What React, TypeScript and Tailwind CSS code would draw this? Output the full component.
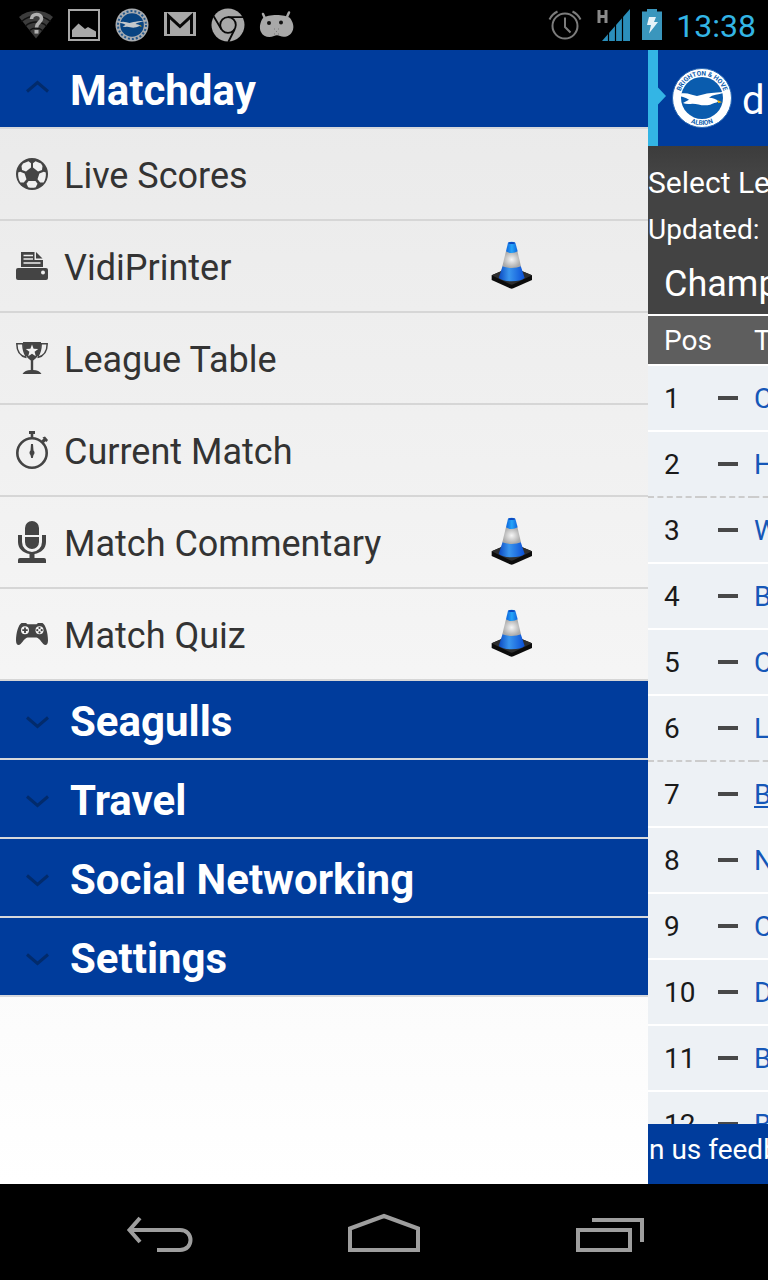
import { useState } from "react";
import type { ReactNode } from "react";

interface MenuItem {
  label: string;
  icon: ReactNode;
  flagged?: boolean;
}

interface TableRow {
  pos: number;
  team: string;
  dashed?: boolean;
  own?: boolean;
}

function FootballIcon() {
  return (
    <svg width="32" height="32" viewBox="0 0 32 32" aria-hidden="true">
      <circle cx="16" cy="16" r="16" fill="#444" />
      <g fill="#f0f0f0">
        <path d="M7 5.5 12.500 3.200l2.500 2V9.500l-5 3.900-4-1.300L5.500 8z" />
        <path d="M25 5.500 19.500 3.200l-2.500 2V9.500l5 3.900 4-1.300.5-4.100z" />
        <path d="M2.200 14.500l2-.7 4.400 1.600 1.900 5.800-2.700 3.300-3.400.1C2.700 22 1.800 18 2.200 14.500z" />
        <path d="M29.800 14.500l-2-.7-4.400 1.600-1.900 5.800 2.700 3.300 3.400.1c1.700-2.600 2.600-6.600 2.200-10.100z" />
        <path d="M12.500 23h7l2 2.800-1.700 3.500a14 14 0 0 1-7.600 0l-1.700-3.500z" />
      </g>
      <path d="M16 10.500l6 4.300-2.300 7h-7.400l-2.300-7z" fill="#444" />
    </svg>
  );
}

function PrinterIcon() {
  return (
    <svg width="32" height="28" viewBox="0 0 32 28" aria-hidden="true">
      <path d="M5 0h13.500v8H27v7H5z" fill="#444" />
      <path d="M20 0l6.500 6.500H20z" fill="#444" />
      <path d="M7.500 3.500H17M7.500 7H17M7.500 11h17" stroke="#eee" strokeWidth="1.5" />
      <path d="M2 16h28a2 2 0 0 1 2 2v8a2 2 0 0 1-2 2H2a2 2 0 0 1-2-2v-8a2 2 0 0 1 2-2z" fill="#444" />
      <circle cx="27" cy="20.5" r="2" fill="#eee" />
    </svg>
  );
}

function TrophyIcon() {
  return (
    <svg width="32" height="32" viewBox="0 0 32 32" aria-hidden="true">
      <path
        d="M8 1.700H.8c0 7 3 12.300 9.700 13.800M24 1.700h7.200c0 7-3 12.300-9.700 13.800M6.800 2c.2 5 1.200 9 3.200 12M25.200 2c-.2 5-1.200 9-3.200 12"
        fill="none"
        stroke="#444"
        strokeWidth="1.5"
      />
      <path
        d="M7 0h18c0 9-1.500 14-7.800 18.500V28c3.800.2 6.800 1.300 8.300 4h-19c1.500-2.700 4.500-3.800 8.300-4v-9.500C8.500 14 7 9 7 0z"
        fill="#444"
      />
      <path d="M16 2.500l1.600 4.300 4.600.2-3.600 2.800 1.200 4.400-3.800-2.500-3.800 2.500 1.200-4.400L9.800 7l4.600-.2z" fill="#f2f2f2" />
    </svg>
  );
}

function StopwatchIcon() {
  return (
    <svg width="32" height="38" viewBox="0 0 32 38" aria-hidden="true">
      <circle cx="16" cy="22" r="14.7" fill="none" stroke="#444" strokeWidth="2.6" />
      <path d="M13 0h6v3h-1.700v4h-2.600V3H13zM25.500 9.500l2-2-1-1L29 5.500l3 3.500-1.500 2-1-.7-2 2z" fill="#444" />
      <path d="M15 13h2l.5 6.500a3 3 0 0 1 0 4.500l-.7 3h-1.600l-.7-3a3 3 0 0 1 0-4.500z" fill="#444" />
    </svg>
  );
}

function MicrophoneIcon() {
  return (
    <svg width="32" height="42" viewBox="0 0 32 42" aria-hidden="true">
      <g fill="#444">
        <path d="M9 14V7a7 7 0 0 1 14 0v7zM9 16h14v5a7 7 0 0 1-14 0z" />
        <path d="M2 14h4v7a10 10 0 0 0 20 0v-7h4v7c0 6.500-5 11-11.500 12v4H28a2 2 0 0 1 2 2v3H2v-3a2 2 0 0 1 2-2h9.500v-4C7 32 2 27.500 2 21z" />
      </g>
    </svg>
  );
}

function GamepadIcon() {
  return (
    <svg width="32" height="22" viewBox="0 0 32 22" aria-hidden="true">
      <path
        d="M5.500 0h4.500l1.500 1.300h9L22 0h4.500c3 1.500 5.500 10 5.500 17.500 0 3-1.200 4.500-2.500 4.500-3 0-5.500-7-9-7.500h-9C8 15 5.500 22 2.500 22 1.200 22 0 20.500 0 17.500 0 10 2.500 1.500 5.500 0z"
        fill="#444"
      />
      <circle cx="9" cy="7.200" r="4" fill="#f4f4f4" />
      <circle cx="23.500" cy="7.200" r="4" fill="#f4f4f4" />
      <path d="M9 4.500v5.400M6.300 7.200h5.400" stroke="#444" strokeWidth="1.8" />
      <g fill="#444">
        <circle cx="23.500" cy="5" r="1.100" />
        <circle cx="23.500" cy="9.400" r="1.100" />
        <circle cx="21.300" cy="7.200" r="1.100" />
        <circle cx="25.700" cy="7.200" r="1.100" />
      </g>
    </svg>
  );
}

function ConeIcon() {
  return (
    <svg width="42" height="50" viewBox="0 0 126 150" role="img" aria-label="Under construction">
      <defs>
        <linearGradient id="coneBlue" x1="0" x2="1">
          <stop offset="0" stopColor="#0a48c0" />
          <stop offset="0.4" stopColor="#3a96ee" />
          <stop offset="1" stopColor="#0a4fd6" />
        </linearGradient>
        <linearGradient id="coneTip" x1="0" x2="1">
          <stop offset="0" stopColor="#0c63dc" />
          <stop offset="0.5" stopColor="#25a4f8" />
          <stop offset="1" stopColor="#0c63dc" />
        </linearGradient>
        <radialGradient id="coneWhite">
          <stop offset="0" stopColor="#f6f6f6" />
          <stop offset="1" stopColor="#aaa" />
        </radialGradient>
      </defs>
      <path d="M2 103l28-12h64l29 12v14l-56 25q-5 2-10 0L2 117z" fill="#0c0c0c" />
      <path d="M2 103l28-12h64l29 12-56 27q-5 2-10 0z" fill="#2e2e2e" />
      <path d="M35 74h54l12 37q-12 10-39 10t-39-10z" fill="url(#coneBlue)" />
      <path d="M45 30h34l11 46q-12 5-28 5t-28-5z" fill="url(#coneWhite)" />
      <path d="M51 5q11-5 22 0l7 26q-8 5-18 5t-17-5z" fill="url(#coneTip)" />
      <ellipse cx="62" cy="6" rx="10" ry="3" fill="#0a48c0" />
    </svg>
  );
}

function Seagull({ fill }: { fill: string }) {
  return (
    <>
      <path
        d="M3 27c6-2 11-2.200 16-.6l6 1.600 8-2c5-1.200 12-1.300 22-2.500-5 2.300-10 2.800-15 4.300l-3 2c4 .3 7 1 9.500 3.400l-2 1.300c-3 .5-5 2.200-9 2.700-6 .8-10-1.500-15-1.500-4 .4-7 .4-9.500-.6l6-3.300C14 29.500 9 28.200 3 27z"
        fill={fill}
      />
      <path d="M45.500 32l4.500 2.300-4 .6z" fill="#f4b400" />
    </>
  );
}

function Crest() {
  return (
    <svg width="60" height="60" viewBox="0 0 60 60" className="shrink-0" role="img" aria-label="Club crest">
      <defs>
        <path id="crestTop" d="M7.500 30a22.500 22.500 0 0 1 45 0" />
        <path id="crestBottom" d="M3 30a27 27 0 0 0 54 0" />
      </defs>
      <circle cx="30" cy="30" r="29.500" fill="#fff" stroke="#2a6ab5" />
      <circle cx="30" cy="30" r="21" fill="#0a5cae" />
      <Seagull fill="#fff" />
      <g fontFamily="Roboto, sans-serif" fontWeight="700" fontSize="6.500" fill="#0a5cae" textAnchor="middle">
        <text>
          <textPath href="#crestTop" startOffset="50%">
            BRIGHTON &amp; HOVE
          </textPath>
        </text>
        <text>
          <textPath href="#crestBottom" startOffset="50%">
            ALBION
          </textPath>
        </text>
      </g>
    </svg>
  );
}

function StatusBar() {
  return (
    <header className="flex h-[50px] shrink-0 items-center justify-between bg-black px-3">
      <div className="flex" aria-hidden="true">
        <svg width="48" height="50" viewBox="0 0 48 50">
          <path d="M7 17a26 26 0 0 1 34 0L24 38.500z" fill="#3c3c3c" />
          <path
            d="M9.500 21.500a22 22 0 0 1 29 0M13.500 26a16 16 0 0 1 21 0M17.500 30.500a10 10 0 0 1 13 0"
            fill="none"
            stroke="#111"
            strokeWidth="1.5"
          />
          <path d="M19.500 19c0-6 10-6 10-.5 0 4-5 4-5 9" fill="none" stroke="#b0b0b0" strokeWidth="3.6" />
          <path d="M22.500 30h4v3.600h-4z" fill="#b0b0b0" />
        </svg>
        <svg width="48" height="50" viewBox="0 0 48 50">
          <path d="M9 10h30v30H9z" fill="none" stroke="#a8a8a8" strokeWidth="2" />
          <path d="M12 37v-7l6.500-6.500 6.500 5.500 3-2 8 4.500V37z" fill="#a8a8a8" />
        </svg>
        <svg width="48" height="50" viewBox="0 0 48 50">
          <circle cx="24" cy="25" r="16.500" fill="#a8acb0" />
          <circle cx="24" cy="25" r="14" fill="none" stroke="#23588c" strokeWidth="2" strokeDasharray="2 2" />
          <circle cx="24" cy="25" r="11.800" fill="#084482" />
          <g transform="translate(9 9) scale(0.5)">
            <Seagull fill="#c4c8cc" />
          </g>
        </svg>
        <svg width="48" height="50" viewBox="0 0 48 50">
          <path d="M8 12h32v24H8z" fill="#a8a8a8" />
          <path d="M12.500 34V16L24 26.500 35.500 16v18" fill="none" stroke="#080808" strokeWidth="3" />
        </svg>
        <svg width="48" height="50" viewBox="0 0 48 50">
          <circle cx="24" cy="25" r="16.500" fill="#a8a8a8" />
          <circle cx="24" cy="25" r="7.800" fill="#a8a8a8" stroke="#080808" strokeWidth="1.8" />
          <path d="M24 17.200h15M17.500 29.500L9.500 16M30.800 29l-6.500 13" stroke="#080808" strokeWidth="1.8" />
        </svg>
        <svg width="48" height="50" viewBox="0 0 48 50">
          <path d="M11 14l2.500 5.500M37 12.500L34 19" stroke="#a8a8a8" strokeWidth="2.5" strokeLinecap="round" />
          <path
            d="M11 18c5-4 22-4 27 0 3 4 4.500 9 2.500 13-2 5-8 7-12.500 5-2-1-4-1-6 0-5 2.500-11 .5-13-4-2-4-1-10 2-14z"
            fill="#a8a8a8"
          />
          <circle cx="17" cy="23" r="2" fill="#111" />
          <circle cx="29" cy="22.500" r="2" fill="#111" />
          <path d="M22 29h1M26 29h1M24 31.500h1M22 34h1M26 34h1" stroke="#777" />
        </svg>
      </div>
      <div className="flex items-center">
        <svg width="124" height="50" viewBox="546 0 124 50" aria-hidden="true">
          <g fill="none" stroke="#7c7c7c" strokeWidth="2">
            <circle cx="565" cy="26" r="12.500" />
            <path d="M565 17.500V27l5.500 5.500M549.500 19.500a17 17 0 0 1 8-8M580.500 19.500a17 17 0 0 0-8-8" />
          </g>
          <path d="M599 10v13M606 10v13M599 16.500h7" stroke="#8a8a8a" strokeWidth="3" />
          <path d="M602 41l28-32v32z" fill="#2b8fbb" />
          <path d="M608.500 32v9M615.500 24v17M622.500 16v25" stroke="#000" strokeWidth="1.2" />
          <path d="M642 11.500h5V9h10v2.500h5V40h-20z" fill="#3a96bd" />
          <path d="M649 17h7l-2 5h4l-9 11.500 2-8.500h-4z" fill="#e6f2f8" />
        </svg>
        <time className="pl-1.5 pt-0.5 text-[32px] leading-10 text-[#33b5e5]">13:38</time>
      </div>
    </header>
  );
}

const matchdayItems: MenuItem[] = [
  { label: "Live Scores", icon: <FootballIcon /> },
  { label: "VidiPrinter", icon: <PrinterIcon />, flagged: true },
  { label: "League Table", icon: <TrophyIcon /> },
  { label: "Current Match", icon: <StopwatchIcon /> },
  { label: "Match Commentary", icon: <MicrophoneIcon />, flagged: true },
  { label: "Match Quiz", icon: <GamepadIcon />, flagged: true },
];

const sections = [
  { title: "Matchday", items: matchdayItems },
  { title: "Seagulls", items: [] },
  { title: "Travel", items: [] },
  { title: "Social Networking", items: [] },
  { title: "Settings", items: [] },
];

function Drawer() {
  const [open, setOpen] = useState<string | null>("Matchday");

  return (
    <nav className="min-w-0 flex-1 overflow-hidden bg-linear-to-b from-[#e9e9e9] to-white">
      {sections.map(({ title, items }) => {
        const isOpen = open === title;
        return (
          <section key={title}>
            <h2>
              <button
                type="button"
                aria-expanded={isOpen}
                onClick={() => setOpen(isOpen ? null : title)}
                className="flex h-[79px] w-full items-center border-b-2 border-[#d6d8dc] bg-[#003c9c] pl-[26px] text-left"
              >
                <svg width="23" height="18" viewBox="0 0 23 18" aria-hidden="true">
                  <path
                    d={isOpen ? "M1 11.500l10.500-9 10.500 9" : "M1 6.500l10.500 9 10.500-9"}
                    fill="none"
                    stroke="#022b6c"
                    strokeWidth="3"
                  />
                </svg>
                <span className="pl-[21px] pt-1 text-[42px] font-bold leading-[50px] text-white">{title}</span>
              </button>
            </h2>
            {isOpen && (
              <ul>
                {items.map((item) => (
                  <li key={item.label}>
                    <a href="#" className="flex h-[92px] items-center border-b-2 border-[#d6d6d6] px-4">
                      {item.icon}
                      <span className="w-[443px] shrink-0 whitespace-nowrap pl-4 pt-1 text-4xl leading-[44px] text-[#333]">
                        {item.label}
                      </span>
                      {item.flagged && <ConeIcon />}
                    </a>
                  </li>
                ))}
              </ul>
            )}
          </section>
        );
      })}
    </nav>
  );
}

const rows: TableRow[] = [
  { pos: 1, team: "C" },
  { pos: 2, team: "H", dashed: true },
  { pos: 3, team: "W" },
  { pos: 4, team: "B" },
  { pos: 5, team: "C" },
  { pos: 6, team: "L", dashed: true },
  { pos: 7, team: "B", own: true },
  { pos: 8, team: "N" },
  { pos: 9, team: "C" },
  { pos: 10, team: "D" },
  { pos: 11, team: "B" },
  { pos: 12, team: "B" },
];

function LeaguePage() {
  return (
    <main className="flex w-[120px] shrink-0 flex-col overflow-hidden whitespace-nowrap bg-[#edf1f5]">
      <div className="flex h-24 shrink-0 items-center bg-[#003c9c]">
        <svg width="18" height="96" viewBox="0 0 18 96" className="shrink-0" aria-hidden="true">
          <path d="M0 0h10v37.500l8 8.500-8 8.500V96H0z" fill="#33b5e5" />
        </svg>
        <div className="flex items-center pl-1.5">
          <Crest />
          <h1 className="pl-2.5 pt-1.5 text-[40px] leading-[48px] text-white">d</h1>
        </div>
      </div>
      <div className="shrink-0 border-b-2 border-white bg-linear-to-b from-[#3c3c3c] to-[#434343] to-15% pt-3.5 text-white">
        <p className="text-[30px] leading-[46px]">Select Le</p>
        <p className="text-[28px] leading-[48px]">Updated:</p>
        <p className="pl-4 text-4xl leading-[60px]">Champ</p>
      </div>
      <div className="min-h-0 flex-1 overflow-hidden">
        <table className="w-full table-fixed border-separate border-spacing-0 text-[28px] leading-8">
          <thead>
            <tr className="h-[50px] bg-[#5e5e5e] text-left text-white">
              <th colSpan={2} className="w-[106px] border-b-2 border-white p-0 pl-4 pt-0.5 font-normal">
                Pos
              </th>
              <th className="border-b-2 border-white p-0 pt-0.5 font-normal">T</th>
            </tr>
          </thead>
          <tbody>
            {rows.map((row) => {
              const border = row.dashed ? "border-b-2 border-dashed border-[#ccc]" : "border-b-2 border-white";
              return (
                <tr key={row.pos} className="h-[66px]">
                  <td className={`p-0 pl-4 pt-0.5 text-[#1a1a1a] ${border}`}>{row.pos}</td>
                  <td className={`p-0 pl-[17px] ${border}`}>
                    <div className="h-1 w-5 bg-[#484848]"></div>
                  </td>
                  <td className={`p-0 pt-0.5 ${border}`}>
                    <a href="#" className={row.own ? "text-[#1557b8] underline" : "text-[#1557b8]"}>
                      {row.team}
                    </a>
                  </td>
                </tr>
              );
            })}
          </tbody>
        </table>
      </div>
      <footer className="h-[60px] shrink-0 bg-[#003c9c] pl-px text-[28px] leading-[52px] text-white">n us feedb</footer>
    </main>
  );
}

function NavBar() {
  return (
    <footer className="flex h-24 shrink-0 items-center justify-center gap-[152px] bg-black">
      <button type="button" aria-label="Back">
        <svg width="72" height="48" viewBox="124 1208 72 48" fill="none" stroke="#9e9e9e" strokeWidth="4">
          <path d="M140 1218l-10.500 12 10.500 12M130 1230h50c14 0 14 20 0 20h-23" />
        </svg>
      </button>
      <button type="button" aria-label="Home">
        <svg width="72" height="48" viewBox="348 1208 72 48" fill="none" stroke="#9e9e9e" strokeWidth="4">
          <path d="M350 1250v-21.500l34-12.500 34 12.500V1250z" />
        </svg>
      </button>
      <button type="button" aria-label="Recent apps">
        <svg width="72" height="48" viewBox="572 1208 72 48" fill="none" stroke="#9e9e9e" strokeWidth="4">
          <path d="M578 1230h52v20h-52zM592 1220h50v22" />
        </svg>
      </button>
    </footer>
  );
}

export default function App() {
  return (
    <div className="flex h-screen flex-col overflow-hidden font-[Roboto,sans-serif]">
      <StatusBar />
      <div className="flex min-h-0 flex-1">
        <Drawer />
        <LeaguePage />
      </div>
      <NavBar />
    </div>
  );
}
